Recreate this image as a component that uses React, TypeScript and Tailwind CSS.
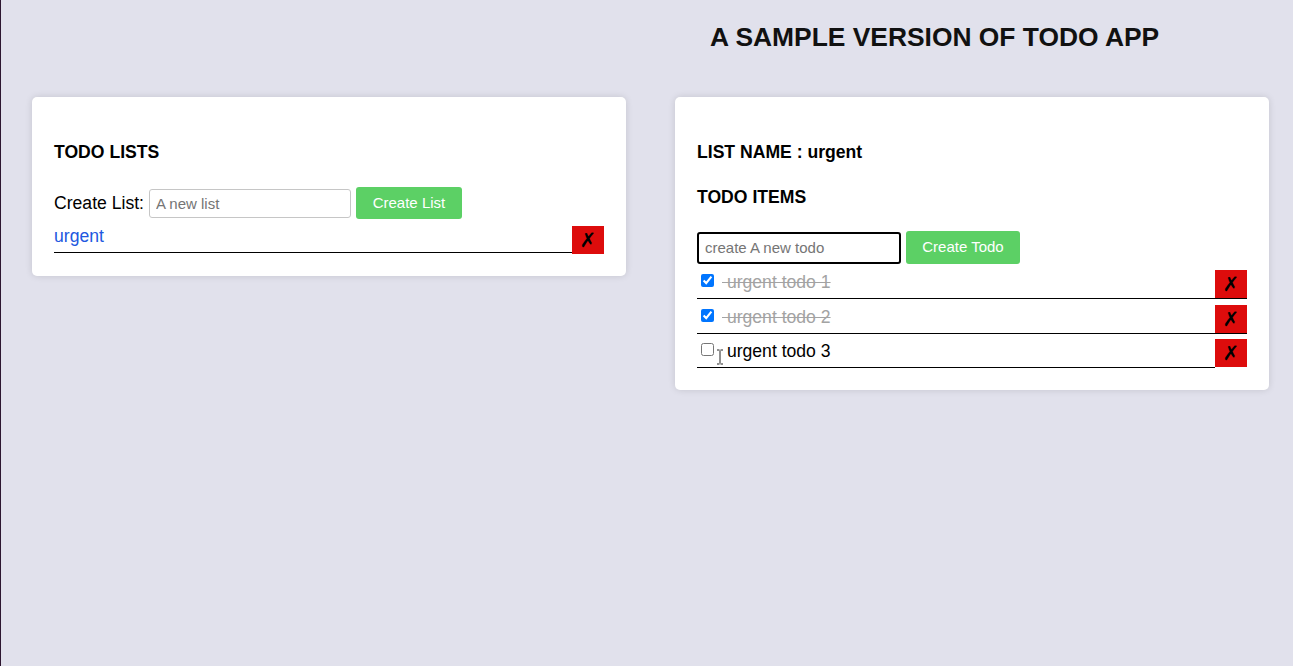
import { useState } from "react";

interface Todo {
  id: number;
  title: string;
  done: boolean;
}

const FONT = { fontFamily: '"Liberation Sans", Arial, sans-serif' };

function DeleteButton({ underline }: { underline?: boolean }) {
  return (
    <button
      type="button"
      className={
        "w-[32px] shrink-0 bg-[#dd0c0c] flex items-center justify-center text-[20px] font-bold text-black leading-none " +
        (underline ? "h-[29px] border-b border-black" : "h-[28px]")
      }
      style={{ fontFamily: '"DejaVu Sans", sans-serif' }}
    >
      ✗
    </button>
  );
}

export default function App() {
  const [lists] = useState(["urgent"]);
  const [todos, setTodos] = useState<Todo[]>([
    { id: 1, title: "urgent todo 1", done: true },
    { id: 2, title: "urgent todo 2", done: true },
    { id: 3, title: "urgent todo 3", done: false },
  ]);

  const toggle = (id: number) =>
    setTodos((ts) => ts.map((t) => (t.id === id ? { ...t, done: !t.done } : t)));

  return (
    <div
      className="min-h-[666px] bg-[#e1e1ec] border-l border-[#2d1630] text-black"
      style={FONT}
    >
      <h1 className="pl-[709px] pt-[22px] text-[26.4px] leading-[30px] font-bold text-[#111]">
        A SAMPLE VERSION OF TODO APP
      </h1>

      <div className="flex items-start gap-[49px] pl-[31px] mt-[45px]">
        {/* lists */}
        <div className="w-[594px] bg-white rounded-[5px] shadow-[0_0_7px_rgba(0,0,0,0.13)] px-[22px] pt-[45px] pb-[22px]">
          <h3 className="text-[17.6px] leading-[21px] font-bold">TODO LISTS</h3>
          <div className="flex items-center mt-[24px] h-[32px]">
            <label className="text-[17.6px] leading-[21px] mr-[5px]">Create List:</label>
            <input
              type="text"
              placeholder="A new list"
              className="w-[202px] h-[29px] border border-[#c6c6c6] rounded-[3px] px-[6px] text-[15px] placeholder:text-[#757575] outline-none"
            />
            <button
              type="button"
              className="ml-[5px] w-[106px] h-[32px] bg-[#5cd065] text-white text-[15px] rounded-[3px]"
            >
              Create List
            </button>
          </div>
          {lists.map((l) => (
            <div key={l} className="flex items-start mt-[7px]">
              <div className="flex-1 h-[27px] border-b border-black">
                <a className="block text-[17.6px] leading-[21px] text-[#2158e0] cursor-pointer">{l}</a>
              </div>
              <DeleteButton />
            </div>
          ))}
        </div>

        {/* todos */}
        <div className="w-[594px] bg-white rounded-[5px] shadow-[0_0_7px_rgba(0,0,0,0.13)] px-[22px] pt-[45px] pb-[22px]">
          <h3 className="text-[17.6px] leading-[21px] font-bold">LIST NAME : urgent</h3>
          <h3 className="text-[17.6px] leading-[21px] font-bold mt-[24px]">TODO ITEMS</h3>
          <div className="flex items-center mt-[23px] h-[33px]">
            <input
              type="text"
              placeholder="create A new todo"
              className="w-[204px] h-[32px] border-2 border-black rounded-[3px] px-[6px] text-[15px] placeholder:text-[#757575] outline-none"
            />
            <button
              type="button"
              className="ml-[5px] w-[114px] h-[33px] bg-[#5cd065] text-white text-[15px] rounded-[3px]"
            >
              Create Todo
            </button>
          </div>
          {todos.map((t, i) => (
            <div
              key={t.id}
              className={"relative flex items-start " + (i === 2 ? "mt-[5px]" : "mt-[6px]")}
            >
              <div className="flex-1 h-[29px] border-b border-black flex items-start">
                <input
                  type="checkbox"
                  checked={t.done}
                  onChange={() => toggle(t.id)}
                  className="w-[13px] h-[13px] ml-[4px] mr-[8px] mt-[4px]"
                />
                <span
                  className={
                    "text-[17.6px] leading-[21px] mt-[2px] " +
                    (t.done ? "line-through text-[#a3a3a3]" : "text-black")
                  }
                >
                  {"\u00a0" + t.title}
                </span>
              </div>
              <DeleteButton underline={i < todos.length - 1} />
              {i === 2 && (
                <svg
                  className="absolute left-[19px] top-[10px]"
                  width="8"
                  height="16"
                  viewBox="0 0 8 16"
                >
                  <path d="M1 1h2.5M4.5 1H7M4 1.5v13M1 15h2.5M4.5 15H7" stroke="#fff" strokeWidth="3" fill="none" />
                  <path d="M1 1h2.5M4.5 1H7M4 1.5v13M1 15h2.5M4.5 15H7" stroke="#222" strokeWidth="1" fill="none" />
                </svg>
              )}
            </div>
          ))}
        </div>
      </div>
    </div>
  );
}
